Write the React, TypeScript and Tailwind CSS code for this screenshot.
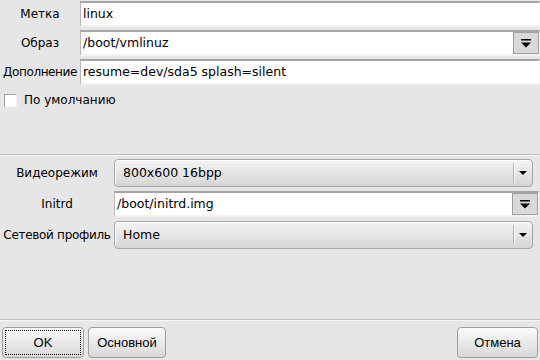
function DropArrow({ bar }: { bar?: boolean }) {
  return (
    <svg width="12" height="12" viewBox="0 0 12 12">
      {bar && <rect x="1" y="2" width="10" height="1.5" fill="#000" />}
      <path d={bar ? "M1 5.5 H11 L6 10.5 Z" : "M2 4 H10 L6 8 Z"} fill="#000" />
    </svg>
  );
}

function TextField({ value, withButton }: { value: string; withButton?: boolean }) {
  return (
    <div className="flex h-[26px] flex-1 items-stretch border-t-2 border-l border-t-[#a4a4a4] border-l-[#b8b8b8] border-b-2 border-b-[#f2f2f2] border-r border-r-[#f4f4f4] bg-white">
      <div className="flex flex-1 items-center pl-[2px] text-[12.5px] leading-none whitespace-nowrap">{value}</div>
      {withButton && (
        <div className="flex w-[26px] items-center justify-center border border-[#a0a0a0] bg-[#d9d9d9]">
          <DropArrow bar />
        </div>
      )}
    </div>
  );
}

function Combo({ value }: { value: string }) {
  return (
    <div className="flex h-[28px] flex-1 items-center rounded-[4px] border border-[#a6a6a6] bg-gradient-to-b from-[#f4f4f4] to-[#d6d6d6] shadow-[inset_1px_1px_0_#ffffff]">
      <div className="flex-1 pl-[8px] text-[12.5px] leading-none">{value}</div>
      <div className="h-[20px] w-[1px] bg-[#b0b0b0] shadow-[1px_0_0_#ffffff]" />
      <div className="flex w-[18px] items-center justify-center">
        <DropArrow />
      </div>
    </div>
  );
}

function Button({ label, focused }: { label: string; focused?: boolean }) {
  return (
    <div className="flex h-[31px] items-center justify-center rounded-[4px] border border-[#9e9e9e] bg-gradient-to-b from-[#fbfbfb] to-[#d8d8d8] p-[2px]">
      <div
        className={
          "flex h-full w-full items-center justify-center font-['Liberation_Sans'] text-[13px] " +
          (focused ? "border border-dotted border-black" : "")
        }
      >
        {label}
      </div>
    </div>
  );
}

export default function App() {
  return (
    <div className="flex h-[360px] w-[540px] flex-col overflow-hidden bg-[#e6e6e6] font-['DejaVu_Sans',sans-serif] text-[12px] text-black">
      <div className="flex h-[154px] flex-col pt-[1px]">
        <div className="grid grid-cols-[80px_1fr] gap-y-[3px]">
          <div className="flex items-center justify-center whitespace-nowrap">Метка</div>
          <TextField value="linux" />
          <div className="flex items-center justify-center whitespace-nowrap">Образ</div>
          <TextField value="/boot/vmlinuz" withButton />
          <div className="flex items-center justify-center whitespace-nowrap tracking-[-0.4px]">Дополнение</div>
          <TextField value="resume=dev/sda5 splash=silent" />
        </div>
        <div className="mt-[6px] flex items-center gap-[7px] pl-[4px]">
          <div className="h-[13px] w-[13px] border border-t-[#a0a0a0] border-l-[#a0a0a0] border-b-[#f4f4f4] border-r-[#f4f4f4] bg-white" />
          <span>По умолчанию</span>
        </div>
      </div>
      <div className="h-[1px] bg-[#bdbdbd]" />
      <div className="h-[1px] bg-[#f6f6f6]" />
      <div className="flex-1 pt-[3px] pr-[7px]">
        <div className="grid grid-cols-[114px_1fr] gap-y-[4px]">
          <div className="flex items-center justify-center whitespace-nowrap">Видеорежим</div>
          <Combo value="800x600 16bpp" />
          <div className="flex items-center justify-center">Initrd</div>
          <div className="-mr-[6px] flex">
            <TextField value="/boot/initrd.img" withButton />
          </div>
          <div className="flex items-center justify-center whitespace-nowrap tracking-[-0.3px]">Сетевой профиль</div>
          <Combo value="Home" />
        </div>
      </div>
      <div className="h-[1px] bg-[#bdbdbd]" />
      <div className="h-[1px] bg-[#f6f6f6]" />
      <div className="flex items-center gap-[4px] px-[2px] pt-[6px] pb-[2px]">
        <div className="w-[82px]">
          <Button label="OK" focused />
        </div>
        <div className="w-[78px]">
          <Button label="Основной" />
        </div>
        <div className="flex-1" />
        <div className="w-[81px]">
          <Button label="Отмена" />
        </div>
      </div>
    </div>
  );
}
